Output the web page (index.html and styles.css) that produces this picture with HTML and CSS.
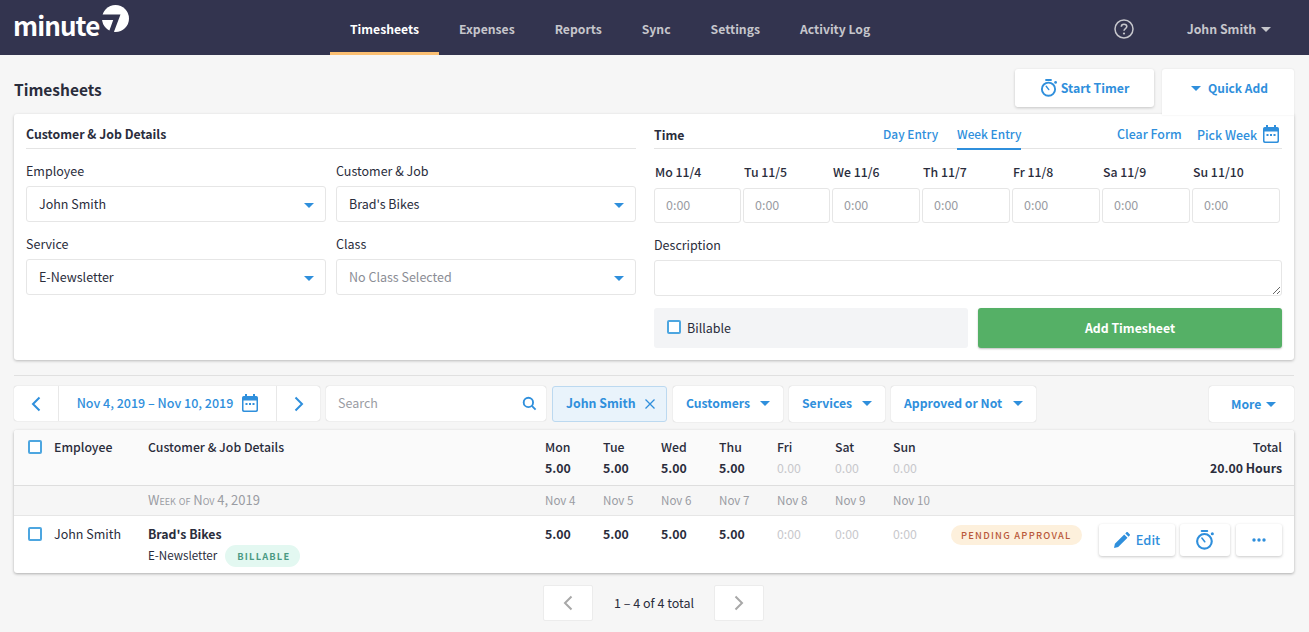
FILE: index.html
```html
<!DOCTYPE html>
<html lang="en">
<head>
<meta charset="utf-8">
<title>Timesheets</title>
<link rel="stylesheet" href="styles.css">
</head>
<body>
<svg class="defs" width="0" height="0" aria-hidden="true">
  <symbol id="timer" viewBox="0 0 18 18">
    <path d="M6 1h5" fill="none" stroke="currentColor" stroke-width="1.8" stroke-linecap="round"/>
    <circle cx="8.5" cy="10.2" r="6.6" fill="none" stroke="currentColor" stroke-width="1.9"/>
    <path d="M8.8 10.6 6.2 7.2" fill="none" stroke="currentColor" stroke-width="1.4" stroke-linecap="round"/>
    <circle cx="15.6" cy="3.4" r="1.4" fill="currentColor"/>
  </symbol>
  <symbol id="cal" viewBox="0 0 16 18">
    <path d="M3 0h2v2h6V0h2v2h1.2A1.8 1.8 0 0 1 16 3.800V16.200A1.800 1.800 0 0 1 14.200 18H1.800A1.800 1.800 0 0 1 0 16.200V3.800A1.800 1.800 0 0 1 1.800 2H3zM1.500 6.500v9.200c0 .4.300.8.800.8h11.400c.5 0 .8-.4.800-.8V6.500z" fill="currentColor"/>
    <rect x="3.500" y="9" width="2" height="2" fill="currentColor"/><rect x="7" y="9" width="2" height="2" fill="currentColor"/><rect x="10.500" y="9" width="2" height="2" fill="currentColor"/>
  </symbol>
</svg>

<header class="topbar">
  <a class="logo">
    <span class="logo-text">minute</span>
    <svg class="logo-mark" viewBox="0 0 27 27" aria-hidden="true">
      <circle cx="13.500" cy="13.500" r="13.500" fill="#fff"/>
      <path d="M-1 9.500H18.500L11.500 28H6.500L11.200 15H-1Z" fill="#33344f"/>
    </svg>
  </a>
  <nav class="nav">
    <a class="nav-item active">Timesheets</a>
    <a class="nav-item">Expenses</a>
    <a class="nav-item">Reports</a>
    <a class="nav-item">Sync</a>
    <a class="nav-item">Settings</a>
    <a class="nav-item">Activity Log</a>
  </nav>
  <div class="top-right">
    <svg class="help" viewBox="0 0 20 20" aria-hidden="true"><circle cx="10" cy="10" r="9" fill="none" stroke="currentColor" stroke-width="1.500"/><path d="M7.300 7.800C7.300 6.200 8.500 5.200 10 5.200C11.600 5.200 12.800 6.200 12.800 7.600C12.800 9.600 10 9.600 10 11.800" fill="none" stroke="currentColor" stroke-width="1.600"/><circle cx="10" cy="14.500" r="1.100" fill="currentColor"/></svg>
    <span class="user">John Smith <i class="caret caret-grey"></i></span>
  </div>
</header>

<main class="main">
  <div class="title-row">
    <h1 class="title">Timesheets</h1>
    <div class="title-actions">
      <button class="tab-btn"><svg class="ico18"><use href="#timer"/></svg>Start Timer</button>
      <button class="tab-btn tab-open"><i class="caret"></i>Quick Add</button>
    </div>
  </div>

  <section class="panel">
    <div class="col-left">
      <div class="section-head"><strong>Customer &amp; Job Details</strong></div>
      <div class="fields">
        <div class="field"><label>Employee</label><div class="select">John Smith<i class="caret"></i></div></div>
        <div class="field"><label>Customer &amp; Job</label><div class="select">Brad's Bikes<i class="caret"></i></div></div>
        <div class="field"><label>Service</label><div class="select">E-Newsletter<i class="caret"></i></div></div>
        <div class="field"><label>Class</label><div class="select muted">No Class Selected<i class="caret"></i></div></div>
      </div>
    </div>
    <div class="col-right">
      <div class="section-head time-head">
        <strong class="time-title">Time</strong>
        <a class="link day-entry">Day Entry</a>
        <a class="link week-entry">Week Entry</a>
        <a class="link clear-form">Clear Form</a>
        <a class="link pick-week">Pick Week<svg class="ico-cal"><use href="#cal"/></svg></a>
      </div>
      <div class="days">
        <div class="day"><label>Mo 11/4</label><div class="day-input">0:00</div></div>
        <div class="day"><label>Tu 11/5</label><div class="day-input">0:00</div></div>
        <div class="day"><label>We 11/6</label><div class="day-input">0:00</div></div>
        <div class="day"><label>Th 11/7</label><div class="day-input">0:00</div></div>
        <div class="day"><label>Fr 11/8</label><div class="day-input">0:00</div></div>
        <div class="day"><label>Sa 11/9</label><div class="day-input">0:00</div></div>
        <div class="day"><label>Su 11/10</label><div class="day-input">0:00</div></div>
      </div>
      <label class="desc-label">Description</label>
      <textarea class="desc"></textarea>
      <div class="submit-row">
        <div class="billable"><i class="check"></i>Billable</div>
        <button class="add-btn">Add Timesheet</button>
      </div>
    </div>
  </section>

  <hr class="rule">

  <div class="toolbar">
    <div class="date-group">
      <button class="seg seg-arrow"><svg class="chev" viewBox="0 0 10 16"><path d="M8.500 1.500 2 8l6.500 6.500" /></svg></button>
      <button class="seg seg-date">Nov 4, 2019 – Nov 10, 2019<svg class="ico-cal"><use href="#cal"/></svg></button>
      <button class="seg seg-arrow"><svg class="chev" viewBox="0 0 10 16"><path d="M1.500 1.500 8 8l-6.500 6.500" /></svg></button>
    </div>
    <div class="search"><span>Search</span><svg class="search-ico" viewBox="0 0 16 16"><circle cx="6.800" cy="6.800" r="5" /><path d="m10.500 10.500 4 4" /></svg></div>
    <div class="chip">John Smith<svg class="x" viewBox="0 0 10 10"><path d="M.5.5l9 9M9.500.5l-9 9"/></svg></div>
    <button class="filter filter-customers">Customers<i class="caret"></i></button>
    <button class="filter filter-services">Services<i class="caret"></i></button>
    <button class="filter filter-approved">Approved or Not<i class="caret"></i></button>
    <button class="filter more">More<i class="caret"></i></button>
  </div>

  <section class="table">
    <div class="grid head-row">
      <div><i class="check"></i></div>
      <div class="th">Employee</div>
      <div class="th">Customer &amp; Job Details</div>
      <div class="dayc th">Mon<b>5.00</b></div>
      <div class="dayc th">Tue<b>5.00</b></div>
      <div class="dayc th">Wed<b>5.00</b></div>
      <div class="dayc th">Thu<b>5.00</b></div>
      <div class="dayc th">Fri<b class="zero">0.00</b></div>
      <div class="dayc th">Sat<b class="zero">0.00</b></div>
      <div class="dayc th">Sun<b class="zero">0.00</b></div>
      <div class="dayc th total">Total<b>20.00 Hours</b></div>
    </div>
    <div class="grid week-row">
      <div></div><div></div>
      <div class="week-of">Week of Nov 4, 2019</div>
      <div>Nov 4</div><div>Nov 5</div><div>Nov 6</div><div>Nov 7</div><div>Nov 8</div><div>Nov 9</div><div>Nov 10</div>
      <div></div>
    </div>
    <div class="grid data-row">
      <div><i class="check"></i></div>
      <div class="emp">John Smith</div>
      <div class="job"><strong>Brad's Bikes</strong><div class="svc">E-Newsletter<span class="tag-bill">Billable</span></div></div>
      <div class="hrs">5.00</div><div class="hrs">5.00</div><div class="hrs">5.00</div><div class="hrs">5.00</div>
      <div class="hrs zero">0:00</div><div class="hrs zero">0:00</div><div class="hrs zero">0:00</div>
      <div class="row-end">
        <span class="tag-pend">Pending Approval</span>
        <div class="row-actions">
          <button class="act act-edit"><svg class="pencil" viewBox="0 0 16 16"><path d="M0 16l.9-4.200L10.200 2.500l3.300 3.300L4.200 15.100zM11.300 1.400 12.400.3c.4-.4 1-.4 1.400 0l1.900 1.900c.4.400.4 1 0 1.400l-1.100 1.100z"/></svg>Edit</button>
          <button class="act act-timer"><svg class="ico20"><use href="#timer"/></svg></button>
          <button class="act act-more"><svg class="dots" viewBox="0 0 14 4"><circle cx="2" cy="2" r="1.700"/><circle cx="7" cy="2" r="1.700"/><circle cx="12" cy="2" r="1.700"/></svg></button>
        </div>
      </div>
    </div>
  </section>

  <div class="pager">
    <button class="page-btn"><svg class="chev chev-grey" viewBox="0 0 10 16"><path d="M8.500 1.500 2 8l6.500 6.500" /></svg></button>
    <span class="page-text">1 – 4 of 4 total</span>
    <button class="page-btn"><svg class="chev chev-grey" viewBox="0 0 10 16"><path d="M1.500 1.500 8 8l-6.500 6.500" /></svg></button>
  </div>
</main>
</body>
</html>
```
FILE: styles.css
```css
* { box-sizing: border-box; }
html, body { margin: 0; padding: 0; }
body {
  background: #f6f6f6;
  color: #2a2d3c;
  font: 12.500px/20px "Noto Sans CJK SC", "Noto Sans", sans-serif;
  height: 632px;
  overflow: hidden;
}
button { font: inherit; cursor: pointer; }
.defs { position: absolute; }
.caret {
  display: inline-block;
  width: 0; height: 0;
  border-left: 5px solid transparent;
  border-right: 5px solid transparent;
  border-top: 5.500px solid #2f8fdc;
}
.caret-grey { border-top-color: #c6c6cc; margin-left: 2px; vertical-align: 2px; }

/* top bar */
.topbar {
  height: 55px;
  background: #33344f;
  display: flex;
  align-items: stretch;
  padding-left: 13px;
}
.logo { width: 317px; display: flex; align-items: flex-start; }
.logo-text {
  color: #fff;
  font: 700 26px/1 "Noto Sans CJK SC", sans-serif;
  letter-spacing: -.9px;
  margin-top: 12px;
  width: 89px;
}
.logo-mark { width: 27px; height: 27px; margin-top: 5px; }
.nav { display: flex; }
.nav-item {
  padding: 0 20px;
  line-height: 58px;
  font-weight: 700;
  font-size: 12.200px;
  color: #c6c6cc;
  height: 55px;
}
.nav-item.active { color: #fff; border-bottom: 3px solid #fbbf72; }
.top-right { margin-left: auto; display: flex; align-items: center; padding-right: 38px; padding-top: 2px; color: #c6c6cc; }
.help { width: 20px; height: 20px; margin-right: 53px; }
.user { font-weight: 700; font-size: 12.300px; }

/* main */
.main { padding: 0 15px 0 14px; }
.title-row { display: flex; justify-content: space-between; height: 59px; }
.title { margin: 23px 0 0; font-size: 15.500px; line-height: 22px; font-weight: 700; }
.title-actions { display: flex; gap: 8px; padding-top: 14px; }
.tab-btn {
  width: 139px; height: 38px;
  border: 0; border-radius: 3px;
  background: #fff;
  color: #2f8fdc;
  font-weight: 700;
  font-size: 12.300px;
  box-shadow: 0 1px 3px rgba(0,0,0,.2);
  display: flex; align-items: center; justify-content: center; gap: 3px;
}
.ico18 { width: 18px; height: 18px; }
.tab-open { width: 132px; height: 46px; gap: 7px; padding: 0 0 8px 3px; font-size: 12px; border-radius: 3px 3px 0 0; box-shadow: 0 0 2px rgba(0,0,0,.1); position: relative; z-index: 1; }

.panel {
  background: #fff;
  height: 246px;
  border-radius: 3px 0 3px 3px;
  box-shadow: 0 1px 3px rgba(0,0,0,.25);
  padding: 0 12px;
  display: flex;
  gap: 18px;
  position: relative;
}
.col-left { width: 610px; }
.col-right { width: 628px; }
.section-head { height: 35px; border-bottom: 1px solid #e4e4e4; line-height: 40px; }
.section-head strong { font-weight: 700; font-size: 12.300px; }
.fields { display: grid; grid-template-columns: 300px 300px; column-gap: 10px; row-gap: 11px; padding-top: 11px; }
.field label { display: block; height: 26px; line-height: 21px; }
.select {
  height: 36px;
  border: 1px solid #e6e6e6;
  border-radius: 3px;
  padding: 0 12px 1px;
  display: flex; justify-content: space-between; align-items: center;
}
.select.muted { color: #8b8d95; }
.select .caret { margin-top: 4px; margin-right: -1px; }

.time-head { display: flex; align-items: flex-start; position: relative; }
.link { color: #2f8fdc; font-weight: 500; font-size: 12.400px; }
.time-title { width: 229px; margin-top: 1px; }
.day-entry { width: 74px; font-size: 11.900px; }
.week-entry { padding: 0; height: 36px; border-bottom: 2px solid #2f8fdc; margin-right: 96px; width: 64px; white-space: nowrap; font-size: 11.900px; }
.clear-form { width: 80px; white-space: nowrap; }
.pick-week { display: flex; align-items: center; gap: 6px; height: 40px; white-space: nowrap; margin-top: 1px; }
.ico-cal { width: 16px; height: 18px; color: #2f8fdc; margin-top: -2px; }

.days { display: grid; grid-template-columns: 87px 87px 88px 88px 88px 88px 88px; column-gap: 2px; padding-top: 13px; }
.day label { display: block; height: 26px; font-weight: 500; padding-left: 1px; font-size: 12.300px; }
.day-input {
  height: 35px;
  border: 1px solid #e6e6e6;
  border-radius: 3px;
  padding-left: 11px;
  line-height: 31px;
  color: #9a9ca3;
}
.desc-label { display: block; height: 25px; margin-top: 12px; }
.desc { display: block; width: 628px; height: 36px; border: 1px solid #e6e6e6; border-radius: 3px; outline: 0; background: #fff; }
.submit-row { display: flex; gap: 10px; margin-top: 12px; }
.billable {
  width: 314px; height: 40px;
  background: #f3f4f6;
  border-radius: 3px;
  padding-left: 13px;
  display: flex; align-items: center; line-height: 40px;
}
.check {
  display: block;
  width: 14px; height: 14px;
  border: 2px solid #4da6e0;
  border-radius: 2px;
  background: #fff;
}
.billable .check { margin-right: 6px; margin-top: -2px; }
.add-btn {
  flex: 1; height: 40px;
  border: 0; border-radius: 3px;
  background: #55b066;
  color: #fff;
  font-weight: 700;
  font-size: 12.300px;
  box-shadow: 0 1px 2px rgba(0,0,0,.25);
}

.rule { border: 0; border-top: 1px solid #e0e0e0; margin: 15px 0 10px; }

/* toolbar */
.toolbar { display: flex; gap: 6px; height: 36px; align-items: flex-start; }
.date-group { display: flex; width: 306px; height: 35px; background: #fff; border-radius: 3px; box-shadow: 0 0 1px rgba(0,0,0,.3); }
.seg { border: 0; background: none; color: #2f8fdc; font-weight: 500; padding: 0; }
.seg-arrow { width: 44px; display: flex; align-items: center; justify-content: center; }
.seg-arrow:last-child { width: 43px; }
.seg-date {
  width: 219px;
  border-left: 1px solid #e8e8e8; border-right: 1px solid #e8e8e8;
  display: flex; align-items: center; justify-content: center; gap: 9px;
  padding-bottom: 2px;
  font-size: 12.500px;
}
.seg-date .ico-cal { width: 16px; height: 18px; margin-top: 0; }
.chev { width: 10px; height: 16px; fill: none; stroke: #2f8fdc; stroke-width: 2; }
.chev-grey { stroke: #a8a8a8; }
.search {
  width: 220px; height: 35px;
  background: #fff;
  border-radius: 3px;
  box-shadow: 0 0 1px rgba(0,0,0,.3);
  padding: 0 9px 2px 12px;
  display: flex; justify-content: space-between; align-items: center;
  color: #9a9ca3;
}
.search-ico { width: 15px; height: 15px; fill: none; stroke: #2f8fdc; stroke-width: 2; margin-top: 2px; }
.chip {
  width: 115px; height: 36px;
  background: #e9f3fb;
  border: 1px solid #bcd9f0;
  border-radius: 3px;
  color: #2f8fdc;
  font-weight: 700;
  font-size: 12.300px;
  display: flex; align-items: center; padding: 0 0 2px 13px; gap: 9px;
}
.x { width: 10px; height: 10px; fill: none; stroke: #2f8fdc; stroke-width: 1.300; margin-top: 2px; }
.filter {
  height: 36px;
  background: #fff;
  border: 0; border-radius: 3px;
  box-shadow: 0 0 1px rgba(0,0,0,.3);
  color: #2f8fdc;
  font-weight: 700;
  font-size: 12.200px;
  padding: 0 13px 2px;
  display: flex; align-items: center; justify-content: space-between;
}
.filter-customers { width: 110px; }
.filter-services { width: 96px; }
.filter-approved { width: 145px; }
.filter.more { margin-left: auto; width: 85px; justify-content: flex-start; gap: 5px; padding: 0 0 0 22px; }

/* table */
.table {
  margin-top: 8px;
  background: #fff;
  border-radius: 3px;
  box-shadow: 0 1px 3px rgba(0,0,0,.3);
  overflow: hidden;
}
.grid {
  display: grid;
  grid-template-columns: 26px 94px 397px repeat(7, 58px) 1fr;
  padding: 0 12px 0 14px;
}
.head-row { height: 56px; background: #fafafa; border-bottom: 1px solid #dedede; padding-top: 7px; }
.head-row .check { margin-top: 3px; }
.th { font-weight: 500; font-size: 12.300px; }
.dayc b { display: block; font-weight: 700; margin-top: 1px; }
.zero, .dayc b.zero { color: #c8c8cc; font-weight: 400; }
.total { text-align: right; }
.week-row {
  height: 30px;
  background: #f6f6f6;
  border-bottom: 1px solid #e6e6e6;
  line-height: 28px;
  color: #9a9ca3;
  font-size: 11.600px;
}
.week-of { font-variant: small-caps; font-size: 13px; }
.data-row { height: 57px; padding-top: 8px; }
.data-row .check { margin-top: 3px; }
.job strong { font-weight: 700; font-size: 12.300px; }
.svc { display: flex; align-items: flex-start; margin-top: 1px; height: 22px; font-size: 11.600px; }
.tag-bill {
  margin-left: 8px;
  height: 22px; padding: 0 10px 0 12px;
  border-radius: 11px;
  background: #e3f8f1;
  color: #4a9a83;
  font-size: 9.300px;
  font-weight: 700;
  letter-spacing: 1.200px;
  text-transform: uppercase;
  line-height: 22px;
}
.hrs { font-weight: 700; font-size: 12.300px; }
.hrs.zero { font-weight: 400; }
.row-end { display: flex; align-items: flex-start; justify-content: space-between; }
.tag-pend {
  margin-top: 1px;
  height: 20px; padding: 0 10px;
  border-radius: 10px;
  background: #fdf0dc;
  color: #b9583a;
  font-size: 9.300px;
  font-weight: 500;
  letter-spacing: 1.260px;
  text-transform: uppercase;
  line-height: 20px;
  white-space: nowrap;
}
.row-actions { display: flex; gap: 5px; }
.act {
  height: 32px;
  background: #fff;
  border: 0; border-radius: 3px;
  box-shadow: 0 1px 3px rgba(0,0,0,.22);
  color: #2f8fdc;
  display: flex; align-items: center; justify-content: center;
  padding: 0;
}
.act-edit { width: 76px; gap: 6px; font-weight: 500; font-size: 12.800px; }
.pencil { width: 16px; height: 16px; fill: #2f8fdc; }
.act-timer { width: 50px; }
.ico20 { width: 20px; height: 20px; }
.act-more { width: 46px; margin-left: 1px; }
.dots { width: 14px; height: 4px; fill: #2f8fdc; }

.pager { display: flex; justify-content: center; align-items: center; margin-top: 12px; padding-right: 2px; }
.page-btn {
  width: 50px; height: 36px;
  background: #fff;
  border: 1px solid #ececec;
  border-radius: 2px;
  display: flex; align-items: center; justify-content: center;
  padding: 0;
}
.page-text { width: 121px; text-align: center; padding-left: 2px; }
```
